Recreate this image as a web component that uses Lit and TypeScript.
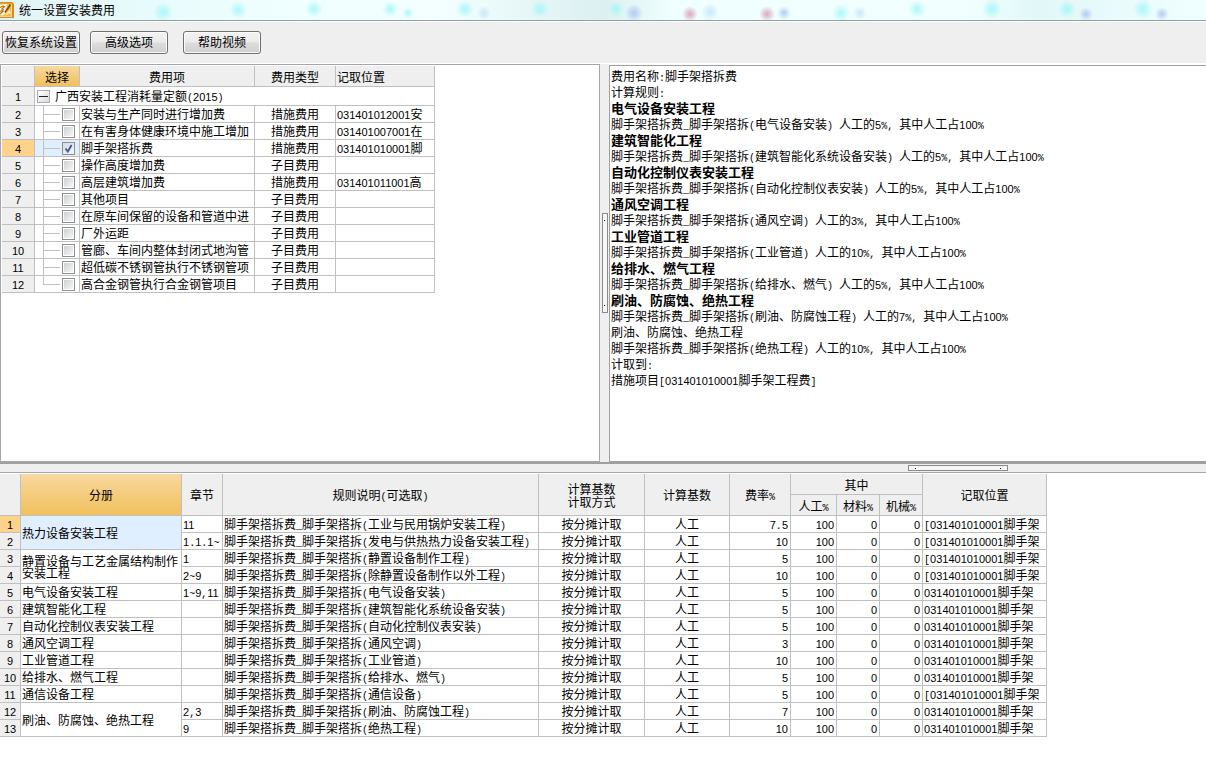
import { LitElement, html, svg, css, nothing } from "lit";
import { customElement, state } from "lit/decorators.js";
import { classMap } from "lit/directives/class-map.js";

interface FeeItem {
  name: string;
  kind: string;
  place: string;
}

interface Rule {
  chapter: string;
  text: string;
  rate: string;
  place: string;
}

interface Volume {
  name: string;
  rules: Rule[];
}

const FEES: FeeItem[] = [
  { name: "安装与生产同时进行增加费", kind: "措施费用", place: "031401012001安" },
  { name: "在有害身体健康环境中施工增加", kind: "措施费用", place: "031401007001在" },
  { name: "脚手架搭拆费", kind: "措施费用", place: "031401010001脚" },
  { name: "操作高度增加费", kind: "子目费用", place: "" },
  { name: "高层建筑增加费", kind: "措施费用", place: "031401011001高" },
  { name: "其他项目", kind: "子目费用", place: "" },
  { name: "在原车间保留的设备和管道中进", kind: "子目费用", place: "" },
  { name: "厂外运距", kind: "子目费用", place: "" },
  { name: "管廊、车间内整体封闭式地沟管", kind: "子目费用", place: "" },
  { name: "超低碳不锈钢管执行不锈钢管项", kind: "子目费用", place: "" },
  { name: "高合金钢管执行合金钢管项目", kind: "子目费用", place: "" },
];

const PLACE = "031401010001脚手架";
const rule = (chapter: string, scope: string, rate: string, bracket = false): Rule => ({
  chapter,
  text: `脚手架搭拆费_脚手架搭拆(${scope})`,
  rate,
  place: (bracket ? "[" : "") + PLACE,
});

const VOLUMES: Volume[] = [
  {
    name: "热力设备安装工程",
    rules: [
      rule("11", "工业与民用锅炉安装工程", "7.5", true),
      rule("1.1.1~", "发电与供热热力设备安装工程", "10", true),
    ],
  },
  {
    name: "静置设备与工艺金属结构制作安装工程",
    rules: [rule("1", "静置设备制作工程", "5", true), rule("2~9", "除静置设备制作以外工程", "10", true)],
  },
  { name: "电气设备安装工程", rules: [rule("1~9,11", "电气设备安装", "5")] },
  { name: "建筑智能化工程", rules: [rule("", "建筑智能化系统设备安装", "5")] },
  { name: "自动化控制仪表安装工程", rules: [rule("", "自动化控制仪表安装", "5")] },
  { name: "通风空调工程", rules: [rule("", "通风空调", "3")] },
  { name: "工业管道工程", rules: [rule("", "工业管道", "10")] },
  { name: "给排水、燃气工程", rules: [rule("", "给排水、燃气", "5")] },
  { name: "通信设备工程", rules: [rule("", "通信设备", "5", true)] },
  {
    name: "刷油、防腐蚀、绝热工程",
    rules: [rule("2,3", "刷油、防腐蚀工程", "7"), rule("9", "绝热工程", "10")],
  },
];

/** Lines of the explanation; a leading "#" marks a heading. */
const NOTES: string[] = [
  "费用名称:脚手架搭拆费",
  "计算规则:",
  "#电气设备安装工程",
  "脚手架搭拆费_脚手架搭拆(电气设备安装) 人工的5%, 其中人工占100%",
  "#建筑智能化工程",
  "脚手架搭拆费_脚手架搭拆(建筑智能化系统设备安装) 人工的5%, 其中人工占100%",
  "#自动化控制仪表安装工程",
  "脚手架搭拆费_脚手架搭拆(自动化控制仪表安装) 人工的5%, 其中人工占100%",
  "#通风空调工程",
  "脚手架搭拆费_脚手架搭拆(通风空调) 人工的3%, 其中人工占100%",
  "#工业管道工程",
  "脚手架搭拆费_脚手架搭拆(工业管道) 人工的10%, 其中人工占100%",
  "#给排水、燃气工程",
  "脚手架搭拆费_脚手架搭拆(给排水、燃气) 人工的5%, 其中人工占100%",
  "#刷油、防腐蚀、绝热工程",
  "脚手架搭拆费_脚手架搭拆(刷油、防腐蚀工程) 人工的7%, 其中人工占100%",
  "刷油、防腐蚀、绝热工程",
  "脚手架搭拆费_脚手架搭拆(绝热工程) 人工的10%, 其中人工占100%",
  "计取到:",
  "措施项目[031401010001脚手架工程费]",
];

/** Sets digits and half-width signs at half the width of a Chinese character. */
function mixed(text: string) {
  return (text.match(/[0-9]+|[\x20-\x2f\x3a-\x7e]+|[^\x20-\x7e]+/g) ?? []).map((run) => {
    if (/^[0-9]/.test(run)) return html`<span class="num">${run}</span>`;
    if (/^[\x20-\x7e]/.test(run)) return html`<span class="sign">${run}</span>`;
    return run;
  });
}

/** Soft lights behind the glass title bar: x, y, radius, colour. */
const LIGHTS: [number, number, number, string][] = [
  [163, 12, 10, "cyan"], [238, 10, 9, "cyan"], [314, 9, 9, "cyan"], [390, 9, 8, "cyan"],
  [408, 13, 6, "cyan"], [465, 9, 9, "cyan"], [484, 13, 7, "blue"], [540, 9, 9, "cyan"],
  [616, 9, 8, "cyan"], [634, 13, 9, "violet"], [690, 14, 8, "pink"], [710, 12, 9, "blue"],
  [767, 14, 8, "pink"], [784, 13, 7, "violet"], [841, 13, 9, "cyan"], [860, 13, 7, "blue"],
  [917, 9, 9, "cyan"], [992, 9, 10, "cyan"], [1067, 9, 9, "cyan"], [1086, 14, 7, "violet"],
  [1143, 9, 10, "cyan"], [1162, 14, 7, "violet"],
];
const HUES: Record<string, string> = {
  cyan: "#9cf6f8",
  blue: "#bfe3fb",
  violet: "#a6c0f2",
  pink: "#d494b4",
};

@customElement("app-root")
export class AppRoot extends LitElement {
  @state() private checked = new Set<number>([2]);
  @state() private current = 2;

  static styles = css`
    :host {
      display: grid;
      grid-template-rows: auto auto minmax(0, 398fr) auto minmax(0, 286fr);
      height: 100vh;
      background: #fff;
      color: #000;
      font: 12px/16px "Noto Sans CJK SC", sans-serif;
    }
    .num {
      font-family: "Liberation Sans", sans-serif;
      font-size: 11px;
      line-height: 0;
    }
    .sign {
      font-family: "Liberation Mono", monospace;
      font-size: 10px;
      line-height: 0;
      white-space: pre;
    }

    .titlebar {
      position: relative;
      display: flex;
      align-items: center;
      gap: 5px;
      height: 20px;
      overflow: hidden;
      border-bottom: 1px solid #8aa3a6;
      background: linear-gradient(90deg, #e2f3f6, #e8fbfc 12%, #f0ffff 25%, #f4ffff 36%, #dcf0f1 50%, #f0ffff 56%, #f2ffff 80%, #e2f7f8 86%, #f0ffff);
    }
    .lights {
      position: absolute;
      inset: 0;
      width: 100%;
      height: 100%;
    }
    .logo {
      position: relative;
      width: 14px;
      height: 16px;
    }
    .title {
      position: relative;
      margin: 0;
      font-size: 12px;
      font-weight: 400;
      line-height: 20px;
    }

    .toolbar {
      display: flex;
      gap: 10px;
      padding: 9px 2px;
      border-top: 1px solid #fff;
      border-bottom: 1px solid #fff;
      background: #efefef;
    }
    .tool {
      min-width: 78px;
      height: 23px;
      padding: 0 0 2px;
      border: 1px solid #707070;
      border-radius: 3px;
      background: linear-gradient(#f3f3f3, #ebebeb 48%, #dddddd 52%, #cfcfcf);
      box-shadow: inset 0 0 0 1px #fbfbfb;
      color: #000;
      font: inherit;
      line-height: 18px;
    }
    .tool.apart {
      margin-left: 5px;
    }

    .upper {
      display: grid;
      grid-template-columns: minmax(0, 600fr) 9px minmax(0, 597fr);
      min-height: 0;
    }
    .fees {
      padding: 1px;
      overflow: auto;
      border: 1px solid #a5a5ad;
    }
    .notes {
      margin-top: 1px;
      padding: 2px 0 0 1px;
      overflow: auto;
      border: solid #a0a0a0;
      border-width: 1px 0 1px 1px;
    }
    .note {
      margin: 0;
      font-size: 12px;
      font-weight: 400;
      line-height: 16px;
      white-space: nowrap;
    }
    .note.head {
      font-size: 13px;
      font-weight: 700;
    }

    .splitter {
      display: flex;
      align-items: center;
      justify-content: center;
      background: #efefef;
    }
    .splitter.across {
      height: 8px;
      border-top: 2px solid #a0a0a0;
      border-bottom: 1px solid #a8a8a8;
      justify-content: flex-end;
    }
    .grip {
      display: flex;
      align-items: center;
      justify-content: space-between;
      box-sizing: border-box;
      border: 1px solid #8a8a8a;
      background: #f6f6f6;
    }
    .grip.tall {
      flex-direction: column;
      width: 6px;
      height: 100px;
      padding: 6px 0;
    }
    .grip.wide {
      width: 100px;
      height: 6px;
      margin-right: 198px;
      padding: 0 6px;
    }
    .dot {
      width: 1px;
      height: 1px;
      background: #1010a0;
    }

    .rules {
      padding-top: 1px;
      overflow: auto;
    }
    table {
      table-layout: fixed;
      border-collapse: separate;
      border-spacing: 0;
    }
    .fee-table {
      width: 433px;
    }
    .rule-table {
      width: 1047px;
    }
    th,
    td {
      box-sizing: border-box;
      height: 17px;
      padding: 0;
      overflow: hidden;
      border: solid #c0c0c0;
      border-width: 0 1px 1px 0;
      font-weight: 400;
      line-height: 16px;
      white-space: nowrap;
      text-align: center;
    }
    th {
      background: #efefef;
    }
    thead th {
      height: 21px;
      line-height: 13px;
    }
    thead th.hot {
      background: linear-gradient(#f9d8a0, #f0c05c);
    }
    tbody th.hot {
      background: #ffd28c;
    }
    .left {
      padding-left: 1px;
      text-align: left;
    }
    .right {
      padding-right: 2px;
      text-align: right;
    }
    .volume {
      padding-left: 1px;
      text-align: left;
      line-height: 12px;
      white-space: normal;
    }
    .volume.hot,
    .pick.hot {
      background: #e0efff;
    }
    .group {
      height: 19px;
    }
    .group-line {
      display: flex;
      align-items: center;
      gap: 5px;
      padding-left: 1px;
    }
    .fold {
      width: 13px;
      height: 13px;
      padding: 0;
      border: 1px solid #a8acb4;
      background: linear-gradient(135deg, #fff, #d8dade);
    }
    .fold svg {
      display: block;
    }
    .branch {
      display: flex;
      align-items: center;
      height: 16px;
      padding-left: 8px;
    }
    .twig {
      display: block;
      width: 17px;
      height: 16px;
      margin-right: 2px;
    }
    .tick {
      appearance: none;
      box-sizing: border-box;
      width: 13px;
      height: 13px;
      margin: 0;
      padding: 1px;
      border: 1px solid #8e8f8f;
      background: linear-gradient(135deg, #cdd1d6, #f6f6f6) content-box #f4f4f4;
    }
    .tick:checked {
      background: url("data:image/svg+xml,%3Csvg xmlns='http://www.w3.org/2000/svg' viewBox='0 0 11 11'%3E%3Cpath d='M2.5 5.5l2.3 3L8.6 2' fill='none' stroke='%23405a9c' stroke-width='1.9'/%3E%3C/svg%3E"),
        linear-gradient(135deg, #d5dae2, #f6f6f6);
    }
  `;

  private toggle(index: number) {
    const next = new Set(this.checked);
    if (!next.delete(index)) next.add(index);
    this.checked = next;
    this.current = index;
  }

  private renderTitle() {
    return html`
      <header class="titlebar">
        <svg class="lights" aria-hidden="true">
          <defs>
            ${Object.entries(HUES).map(
              ([id, hue]) => svg`<radialGradient id=${id}>
                <stop offset="0" stop-color=${hue} stop-opacity="0.8"></stop>
                <stop offset="0.4" stop-color=${hue} stop-opacity="0.5"></stop>
                <stop offset="1" stop-color=${hue} stop-opacity="0"></stop>
              </radialGradient>`
            )}
          </defs>
          ${LIGHTS.map(
            ([x, y, r, hue]) => svg`<circle cx=${x} cy=${y} r=${r} fill="url(#${hue})"></circle>`
          )}
        </svg>
        <svg class="logo" viewBox="0 0 14 16" aria-hidden="true">
          <path d="M0 0h12l2 2v14H0z" fill="#d98a1c"></path>
          <path d="M0 1.500h11.500V14H0z" fill="#f6b840"></path>
          <path d="M0 3l4-1h3v3l-2 2 3 1-2 3-3 2.500-3-.500z" fill="#fff8e8"></path>
          <path d="M0 5.500l3-1.500 1.500.500-3 3M0 9.500l4-2M0 12l3.500-3" fill="none" stroke="#b8680c" stroke-width="1.100"></path>
          <path d="M5 10.500l5.500-8" stroke="#8a4608" stroke-width="1.600"></path>
          <path d="M6.500 12.500l3-3.500 1 3" fill="none" stroke="#fff4d0" stroke-width="1.300"></path>
          <path d="M11.500 2v12.500H0" fill="none" stroke="#ffe9b0" stroke-width=".8"></path>
        </svg>
        <h1 class="title">统一设置安装费用</h1>
      </header>
    `;
  }

  private renderFees() {
    return html`
      <table class="fee-table">
        <colgroup>
          <col width="33" /><col width="45" /><col width="175" /><col width="81" /><col width="99" />
        </colgroup>
        <thead>
          <tr>
            <th></th>
            <th class="hot">选择</th>
            <th>费用项</th>
            <th>费用类型</th>
            <th class="left">记取位置</th>
          </tr>
        </thead>
        <tbody>
          <tr>
            <th>${mixed("1")}</th>
            <td class="left group" colspan="4">
              <div class="group-line">
                <button class="fold" aria-label="折叠" aria-expanded="true">
                  <svg width="11" height="11" viewBox="0 0 11 11"><path d="M1 5.500h9" stroke="#222"></path></svg>
                </button>
                <span>${mixed("广西安装工程消耗量定额(2015)")}</span>
              </div>
            </td>
          </tr>
          ${FEES.map((fee, i) => {
            const hot = i === this.current;
            const last = i === FEES.length - 1;
            return html`
              <tr>
                <th class=${classMap({ hot })}>${mixed(String(i + 2))}</th>
                <td class=${classMap({ pick: true, hot })}>
                  <div class="branch">
                    <svg class="twig" viewBox="0 0 17 16" aria-hidden="true">
                      <path d="M.5 0v${last ? 9 : 16}M1 8.500h16" fill="none" stroke="#c0c0c0"></path>
                    </svg>
                    <input
                      class="tick"
                      type="checkbox"
                      id="fee-${i}"
                      .checked=${this.checked.has(i)}
                      @change=${() => this.toggle(i)}
                    />
                  </div>
                </td>
                <td class="left"><label for="fee-${i}">${fee.name}</label></td>
                <td>${fee.kind}</td>
                <td class="left">${mixed(fee.place)}</td>
              </tr>
            `;
          })}
        </tbody>
      </table>
    `;
  }

  private renderNotes() {
    return NOTES.map((line) =>
      line.startsWith("#")
        ? html`<h2 class="note head">${line.slice(1)}</h2>`
        : html`<p class="note">${mixed(line)}</p>`
    );
  }

  private renderRules() {
    let row = 0;
    return html`
      <table class="rule-table">
        <colgroup>
          ${[21, 161, 41, 316, 106, 85, 61, 46, 43, 43, 124].map((w) => html`<col width=${w} />`)}
        </colgroup>
        <thead>
          <tr>
            <th rowspan="2"></th>
            <th rowspan="2" class="hot">分册</th>
            <th rowspan="2">章节</th>
            <th rowspan="2">${mixed("规则说明(可选取)")}</th>
            <th rowspan="2">计算基数<br />计取方式</th>
            <th rowspan="2">计算基数</th>
            <th rowspan="2">${mixed("费率%")}</th>
            <th colspan="3">其中</th>
            <th rowspan="2">记取位置</th>
          </tr>
          <tr>
            <th>${mixed("人工%")}</th>
            <th>${mixed("材料%")}</th>
            <th>${mixed("机械%")}</th>
          </tr>
        </thead>
        <tbody>
          ${VOLUMES.map((volume, v) =>
            volume.rules.map((r, i) => {
              row += 1;
              return html`
                <tr>
                  <th class=${classMap({ hot: row === 1 })}>${mixed(String(row))}</th>
                  ${i === 0
                    ? html`<td
                        class=${classMap({ volume: true, hot: v === 0 })}
                        rowspan=${volume.rules.length}
                      >${volume.name}</td>`
                    : nothing}
                  <td class="left">${mixed(r.chapter)}</td>
                  <td class="left">${mixed(r.text)}</td>
                  <td>按分摊计取</td>
                  <td>人工</td>
                  <td class="right">${mixed(r.rate)}</td>
                  <td class="right">${mixed("100")}</td>
                  <td class="right">${mixed("0")}</td>
                  <td class="right">${mixed("0")}</td>
                  <td class="left">${mixed(r.place)}</td>
                </tr>
              `;
            })
          )}
        </tbody>
      </table>
    `;
  }

  render() {
    return html`
      ${this.renderTitle()}
      <nav class="toolbar">
        <button class="tool">恢复系统设置</button>
        <button class="tool">高级选项</button>
        <button class="tool apart">帮助视频</button>
      </nav>
      <main class="upper">
        <section class="fees">${this.renderFees()}</section>
        <div class="splitter" role="separator" aria-orientation="vertical">
          <div class="grip tall"><span class="dot"></span><span class="dot"></span></div>
        </div>
        <section class="notes">${this.renderNotes()}</section>
      </main>
      <div class="splitter across" role="separator" aria-orientation="horizontal">
        <div class="grip wide"><span class="dot"></span><span class="dot"></span></div>
      </div>
      <section class="rules">${this.renderRules()}</section>
    `;
  }
}
